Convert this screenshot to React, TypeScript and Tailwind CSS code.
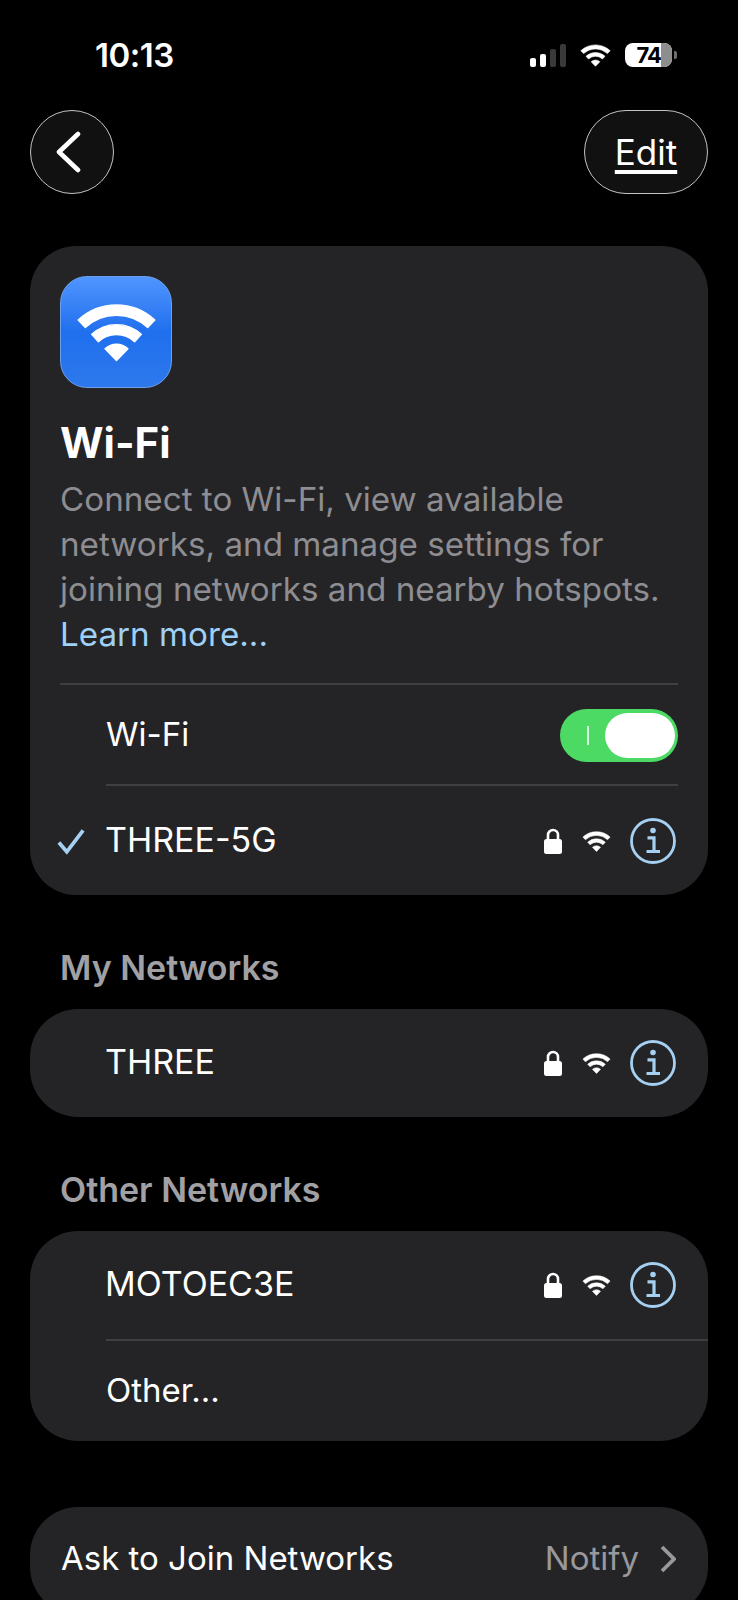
function WifiGlyph({ className }: { className: string }) {
  return (
    <svg viewBox="-1 -1 82 60" className={className} fill="currentColor" stroke="currentColor" strokeWidth="1.5" strokeLinejoin="round">
      <path d="M1.1 16.3A57 57 0 0 1 78.9 16.3L71.7 24A46.5 46.5 0 0 0 8.3 24Z" />
      <path d="M14.8 30.9A37 37 0 0 1 65.2 30.9L58.4 38.3A27 27 0 0 0 21.6 38.3Z" />
      <path d="M28.4 45.6A17 17 0 0 1 51.6 45.6L40 57.5Z" />
    </svg>
  );
}

function LockGlyph() {
  return (
    <svg viewBox="0 0 18 26" className="w-[18px] h-[26px] text-white" fill="none">
      <path d="M4 12V7a5 5 0 0 1 10 0v5" stroke="currentColor" strokeWidth="2.6" />
      <rect x="0" y="11" width="18" height="15" rx="2.5" fill="currentColor" />
    </svg>
  );
}

function InfoGlyph() {
  return (
    <svg viewBox="0 0 46 46" className="w-[46px] h-[46px] text-[#a5d0f2]" fill="none">
      <circle cx="23" cy="23" r="21.5" stroke="currentColor" strokeWidth="2.8" />
      <circle cx="23" cy="12.5" r="2.8" fill="currentColor" />
      <path d="M17.5 19.8H24V33M16.5 33.5H30" stroke="currentColor" strokeWidth="3.2" />
    </svg>
  );
}

function NetworkIcons() {
  return (
    <div className="flex items-center">
      <LockGlyph />
      <WifiGlyph className="w-[29px] h-[21px] ml-[20px] mr-[19px] text-white" />
      <InfoGlyph />
    </div>
  );
}

function NetworkName({ name }: { name: string }) {
  return <span className="text-[34px] -ml-[1px] -mt-[3px]">{name}</span>;
}

function StatusBar() {
  return (
    <div className="h-[110px] flex items-start justify-between pl-[95px] pr-[61px] pt-[35px] text-white">
      <span className="text-[33px] leading-[40px] font-semibold tracking-[-0.5px]">10:13</span>
      <div className="flex items-center mt-[8px]">
        <div className="flex items-end gap-[3.5px] h-[23px]">
          <span className="w-[6.5px] h-[9px] rounded-[2px] bg-white" />
          <span className="w-[6.5px] h-[13px] rounded-[2px] bg-white" />
          <span className="w-[6.5px] h-[18px] rounded-[2px] bg-[#3a3a3a]" />
          <span className="w-[6.5px] h-[23px] rounded-[2px] bg-[#3a3a3a]" />
        </div>
        <WifiGlyph className="w-[31px] h-[23px] ml-[14px] text-white" />
        <div className="ml-[14px] w-[47px] h-[24px] rounded-[8px] overflow-hidden flex bg-white">
          <span className="w-[36px] text-black text-[22px] leading-[24px] font-bold text-right tracking-[-1px]">74</span>
          <span className="flex-1 bg-[#8e8e8e]" />
        </div>
        <span className="w-[3px] h-[8px] ml-[2px] rounded-r-[2px] bg-[#6e6e6e]" />
      </div>
    </div>
  );
}

function NavBar() {
  return (
    <div className="flex justify-between items-center px-[30px] h-[84px]">
      <button className="w-[84px] h-[84px] rounded-full bg-[#111111] border border-[#c4c4c4] flex items-center justify-center">
        <svg viewBox="0 0 26 42" className="w-[26px] h-[42px] text-white -ml-[8px]" fill="none">
          <path d="M23 3L4 21L23 39" stroke="currentColor" strokeWidth="4.6" strokeLinecap="round" strokeLinejoin="round" />
        </svg>
      </button>
      <button className="w-[124px] h-[84px] rounded-[44px] bg-[#111111] border border-[#c4c4c4] flex items-center justify-center text-white text-[35px] leading-[40px] underline decoration-[3.5px] underline-offset-[5px]">
        Edit
      </button>
    </div>
  );
}

export default function App() {
  return (
    <div className="w-[738px] h-[1600px] overflow-hidden bg-black text-white font-['Inter',sans-serif]">
      <StatusBar />
      <NavBar />

      <div className="mx-[30px] mt-[52px] h-[649px] rounded-[46px] bg-[#242426] pt-[30px] pl-[30px]">
        <div className="w-[112px] h-[112px] rounded-[27px] border border-[#6d9eea] bg-gradient-to-b from-[#5095ff] via-[#1f6fee] to-[#2d78ec] flex items-center justify-center">
          <WifiGlyph className="w-[81px] h-[59px] text-white" />
        </div>
        <h1 className="mt-[25px] text-[42px] leading-[60px] font-bold">Wi-Fi</h1>
        <p className="text-[33.2px] leading-[45px] text-[#8d8d92] mt-[4px] whitespace-nowrap">
          Connect to Wi-Fi, view available
          <br />
          networks, and manage settings for
          <br />
          joining networks and nearby hotspots.
          <br />
          <span className="text-[#9fd0f5]">Learn more...</span>
        </p>
        <div className="mt-[26px] mr-[30px] border-t-2 border-[#3f3f41]" />
        <div className="h-[99px] pl-[46px] pr-[30px] flex items-center justify-between">
          <span className="text-[33px]">Wi-Fi</span>
          <div className="relative mt-[1px] w-[118px] h-[53px] rounded-full bg-[#4cd964]">
            <span className="absolute left-[27px] top-[17px] w-[2px] h-[19px] bg-[#d8f5dd]" />
            <span className="absolute left-[45px] top-[4px] w-[70px] h-[45px] rounded-full bg-white" />
          </div>
        </div>
        <div className="ml-[46px] mr-[30px] border-t-2 border-[#3f3f41]" />
        <div className="h-[107px] pt-[3px] pr-[32px] flex items-center justify-between">
          <div className="flex items-center">
            <svg viewBox="0 0 30 28" className="w-[28px] h-[27px] -ml-[3px] mr-[21px] text-[#a5d0f2]" fill="none">
              <path d="M2 15L10.5 25L28 2" stroke="currentColor" strokeWidth="4" />
            </svg>
            <NetworkName name="THREE-5G" />
          </div>
          <NetworkIcons />
        </div>
      </div>

      <h2 className="mt-[52px] ml-[60px] text-[34px] leading-[42px] font-semibold text-[#a0a0a5]">My Networks</h2>
      <div className="mx-[30px] mt-[20px] h-[108px] rounded-[48px] bg-[#242426] pl-[76px] pr-[32px] flex items-center justify-between">
        <NetworkName name="THREE" />
        <NetworkIcons />
      </div>

      <h2 className="mt-[52px] ml-[60px] text-[34px] leading-[42px] font-semibold text-[#a0a0a5]">Other Networks</h2>
      <div className="mx-[30px] mt-[20px] h-[210px] rounded-[48px] bg-[#242426]">
        <div className="h-[108px] pl-[76px] pr-[32px] flex items-center justify-between">
          <NetworkName name="MOTOEC3E" />
          <NetworkIcons />
        </div>
        <div className="ml-[76px] border-t-2 border-[#3f3f41]" />
        <div className="h-[100px] pl-[76px] flex items-center">
          <span className="text-[33px]">Other...</span>
        </div>
      </div>

      <div className="mx-[30px] mt-[66px] h-[108px] rounded-[48px] bg-[#242426] pl-[31px] pr-[32px] pb-[4px] flex items-center justify-between">
        <span className="text-[33px]">Ask to Join Networks</span>
        <div className="flex items-center">
          <span className="text-[33px] text-[#98989d]">Notify</span>
          <svg viewBox="0 0 16 28" className="w-[16px] h-[28px] ml-[21px] text-[#98989d]" fill="none">
            <path d="M2 2L14 14L2 26" stroke="currentColor" strokeWidth="3.8" />
          </svg>
        </div>
      </div>
    </div>
  );
}
